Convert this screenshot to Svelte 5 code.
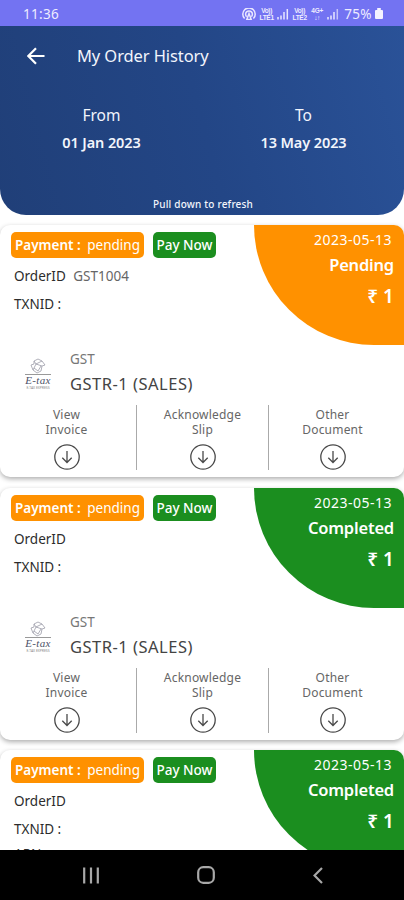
<script>
	const columns = [
		['View', 'Invoice'],
		['Acknowledge', 'Slip'],
		['Other', 'Document']
	];

	const orders = [
		{ id: 'GST1004', status: 'Pending', date: '2023-05-13', amount: 1 },
		{ id: '', status: 'Completed', date: '2023-05-13', amount: 1 },
		{ id: '', status: 'Completed', date: '2023-05-13', amount: 1, note: 'ARN :' }
	];
</script>

{#snippet signal(full)}
	<svg class="signal" viewBox="0 0 12 12" width="12" height="12">
		<path d="M1 11.5V9M4 11.5V7.5M7 11.5V4" />
		<path d="M10.3 11.5V1" opacity={full ? 1 : 0.7} />
	</svg>
{/snippet}

<div class="screen">
	<div class="status-bar">
		<span class="clock">11:36</span>
		<div class="status-icons">
			<svg class="hotspot" viewBox="0 0 14 12" width="14" height="12">
				<path d="M2.6 10.5a6.2 6.2 0 1 1 8.8 0M4.6 8.7a3.4 3.4 0 1 1 4.8 0" />
				<path d="M7 5.5 4.8 11.5h4.4z" fill="#e9e7ff" stroke="none" />
			</svg>
			<div class="net"><span>Vo))</span><span>LTE1</span></div>
			{@render signal(true)}
			<div class="net"><span>Vo))</span><span>LTE2</span></div>
			<div class="net data"><span>4G+</span><span>↓↑</span></div>
			{@render signal(false)}
			<span class="percent">75%</span>
			<svg viewBox="0 0 8 11" width="8" height="11">
				<path d="M2.2 0h3.6v2H7a1 1 0 0 1 1 1v7a1 1 0 0 1-1 1H1a1 1 0 0 1-1-1V3a1 1 0 0 1 1-1h1.2z" fill="#f4f2ff" />
			</svg>
		</div>
	</div>

	<header class="header">
		<div class="title-row">
			<svg class="back" viewBox="0 0 18 18" width="18" height="18">
				<path d="M17.5 9H1.5M9 1.2 1.3 9 9 16.8" />
			</svg>
			<h1>My Order History</h1>
		</div>
		<div class="range">
			<div class="range-item">
				<span class="range-label">From</span>
				<span class="range-date">01 Jan 2023</span>
			</div>
			<div class="range-item">
				<span class="range-label">To</span>
				<span class="range-date">13 May 2023</span>
			</div>
		</div>
		<p class="refresh">Pull down to refresh</p>
	</header>

	<main class="orders">
		{#each orders as order}
			<article class="card">
				<div class="card-top">
					<div class="info">
						<div class="tags">
							<span class="tag payment"><b>Payment :</b> <span>pending</span></span>
							<button class="tag pay">Pay Now</button>
						</div>
						<p class="line"><span>OrderID</span> <span class="order-id">{order.id}</span></p>
						<p class="line">TXNID :</p>
						{#if order.note}
							<p class="line note">{order.note}</p>
						{/if}
					</div>
					<div class="status" class:done={order.status === 'Completed'}>
						<span class="date">{order.date}</span>
						<span class="state">{order.status}</span>
						<span class="amount">₹ {order.amount}</span>
					</div>
				</div>

				<div class="service">
					<div class="logo">
						<svg viewBox="0 0 18 16" width="18" height="16">
							<path d="M5 3 9 1l4 2 3 4-3 1-1 5-4 2-4-3-2-5 3-1zM5 3l2 3 6-3M7 6l-3 6M7 6l6 2M5 10l4 3 3-5" />
						</svg>
						<span class="logo-name">E-tax</span>
						<span class="logo-sub">E-TAX EXPRESS</span>
					</div>
					<div>
						<p class="category">GST</p>
						<p class="name">GSTR-1 (SALES)</p>
					</div>
				</div>

				<div class="downloads">
					{#each columns as [first, second]}
						<div class="download">
							<span>{first}<br />{second}</span>
							<svg viewBox="0 0 26 26" width="26" height="26">
								<circle cx="13" cy="13" r="12.2" />
								<path d="M13 7v11.5M8.3 13.8l4.7 4.7 4.7-4.7" />
							</svg>
						</div>
					{/each}
				</div>
			</article>
		{/each}
	</main>

	<nav class="nav-bar">
		<svg viewBox="0 0 16 17" width="16" height="17">
			<path d="M1.2 0.5v16M8 0.5v16M14.8 0.5v16" />
		</svg>
		<svg viewBox="0 0 18 18" width="18" height="18">
			<rect x="1.2" y="1.2" width="15.6" height="15.6" rx="5" />
		</svg>
		<svg viewBox="0 0 10 17" width="10" height="17">
			<path d="M9 1 1.5 8.5 9 16" />
		</svg>
	</nav>
</div>

<style>
	:global(body) {
		background: #fff;
	}

	.screen {
		display: flex;
		flex-direction: column;
		width: 404px;
		height: 900px;
		overflow: hidden;
		background: #fff;
		font-family: 'Noto Sans', 'Open Sans', sans-serif;
		color: #333;
	}

	p,
	h1 {
		margin: 0;
	}

	svg {
		display: block;
		flex: none;
	}

	/* --- STATUS BAR --- */
	.status-bar {
		display: flex;
		flex: none;
		align-items: center;
		justify-content: space-between;
		box-sizing: border-box;
		height: 26px;
		padding: 1px 21px 0 23px;
		background: #7373f2;
		color: #eeecff;
	}

	.clock {
		font-size: 13.5px;
		letter-spacing: 0.3px;
	}

	.status-icons {
		display: flex;
		align-items: center;
		gap: 3px;
	}

	.hotspot path,
	.signal path {
		fill: none;
		stroke: #e9e7ff;
		stroke-width: 1.5;
	}

	.net {
		display: flex;
		flex-direction: column;
		align-items: center;
		width: 15px;
		font-family: 'Liberation Sans', sans-serif;
		font-size: 6.5px;
		font-weight: 700;
		line-height: 7px;
		letter-spacing: -0.3px;
	}

	.data {
		width: 14px;
	}

	.percent {
		margin-left: 2px;
		font-size: 13.5px;
		letter-spacing: 0.4px;
	}

	/* --- HEADER --- */
	.header {
		display: flex;
		flex: none;
		flex-direction: column;
		box-sizing: border-box;
		height: 189px;
		padding-top: 17px;
		border-radius: 0 0 26px 26px;
		background: linear-gradient(75deg, #203f78, #234686 50%, #2a5298);
		color: #f2f5fc;
	}

	.title-row {
		display: flex;
		align-items: center;
		gap: 32px;
		height: 26px;
		padding-left: 27px;
	}

	.back path {
		fill: none;
		stroke: #fff;
		stroke-width: 2.2;
	}

	h1 {
		font-size: 16.5px;
		font-weight: 400;
		line-height: 26px;
		letter-spacing: -0.1px;
	}

	.range {
		display: grid;
		grid-template-columns: 203px 1fr;
		margin-top: 33px;
	}

	.range-item {
		display: flex;
		flex-direction: column;
		align-items: center;
	}

	.range-label {
		font-size: 15.5px;
		line-height: 27px;
	}

	.range-date {
		font-size: 14.5px;
		font-weight: 600;
		line-height: 27px;
		letter-spacing: -0.1px;
	}

	.refresh {
		margin-top: 40px;
		font-size: 10px;
		font-weight: 500;
		line-height: 16px;
		letter-spacing: 0.2px;
		padding-left: 2px;
		text-align: center;
	}

	/* --- ORDER CARDS --- */
	.orders {
		display: flex;
		flex: 1;
		flex-direction: column;
		gap: 10.5px;
		min-height: 0;
		padding-top: 10px;
		overflow: hidden;
	}

	.card {
		flex: none;
		height: 252px;
		border-radius: 10px;
		background: #fff;
		box-shadow: 0 2px 5px rgba(0, 0, 0, 0.32);
	}

	.card-top {
		display: flex;
		justify-content: space-between;
		height: 120px;
	}

	.info {
		padding: 7px 0 0 11px;
	}

	.tags {
		display: flex;
		gap: 9px;
		margin-bottom: 4px;
	}

	.tag {
		box-sizing: border-box;
		height: 26px;
		border: none;
		border-radius: 5px;
		color: #fff;
		font-family: inherit;
		font-size: 13.5px;
		line-height: 26px;
		white-space: nowrap;
	}

	.payment {
		display: flex;
		justify-content: space-between;
		width: 133px;
		padding: 0 4px;
		background: #ff9100;
	}

	.payment b {
		font-weight: 600;
	}

	.pay {
		width: 63px;
		padding: 0;
		background: #1b8e1f;
		font-weight: 500;
	}

	.line {
		height: 28px;
		padding-left: 3px;
		color: #2c2c2c;
		font-size: 13.5px;
		line-height: 28px;
	}

	.note {
		margin-top: -3px;
	}

	.order-id {
		margin-left: 4px;
		color: #666;
	}

	.status {
		display: flex;
		flex-direction: column;
		align-items: flex-end;
		box-sizing: border-box;
		width: 150px;
		height: 120px;
		padding: 4px 10px 0 0;
		border-radius: 0 10px 0 120px;
		background: #ff9100;
		color: #fff;
	}

	.status.done {
		background: #1b8e1f;
	}

	.date {
		margin-right: 2px;
		font-size: 14px;
		line-height: 21px;
		letter-spacing: 0.5px;
	}

	.state {
		font-size: 16.5px;
		font-weight: 600;
		line-height: 29px;
		letter-spacing: -0.2px;
	}

	.amount {
		font-size: 19px;
		font-weight: 600;
		line-height: 34px;
	}

	.service {
		display: flex;
		gap: 19px;
		height: 58px;
		padding: 2px 0 0 25px;
	}

	.logo {
		display: flex;
		flex-direction: column;
		align-items: center;
		width: 26px;
		padding-top: 11px;
	}

	.logo path {
		fill: none;
		stroke: #9c9ca8;
		stroke-width: 0.8;
	}

	.logo-name {
		width: 26px;
		border-top: 1px solid #999;
		color: #4c5168;
		font-family: 'Liberation Serif', serif;
		font-size: 11px;
		font-style: italic;
		line-height: 11px;
		letter-spacing: 0.3px;
		text-align: center;
	}

	.logo-sub {
		color: #888;
		font-size: 3.4px;
		line-height: 4px;
		white-space: nowrap;
	}

	.category {
		color: #777;
		font-size: 13.5px;
		line-height: 24px;
	}

	.name {
		color: #444;
		font-size: 16.5px;
		line-height: 25px;
		letter-spacing: 0.5px;
	}

	.downloads {
		display: grid;
		grid-template-columns: 136px 132px 1fr;
		height: 63px;
		padding-right: 8px;
	}

	.download {
		display: flex;
		flex-direction: column;
		align-items: center;
		gap: 7px;
		padding-top: 2px;
		color: #666;
		font-size: 12px;
		line-height: 15px;
		letter-spacing: 0.2px;
		text-align: center;
	}

	.download:first-child {
		padding-right: 3px;
	}

	.download + .download {
		border-left: 1px solid #aaa;
	}

	.download svg {
		fill: none;
		stroke: #4a4a4a;
		stroke-width: 1.3;
	}

	/* --- NAV BAR --- */
	.nav-bar {
		display: flex;
		flex: none;
		align-items: center;
		justify-content: space-between;
		box-sizing: border-box;
		height: 50px;
		padding: 0 81px 0 83px;
		background: #000;
	}

	.nav-bar svg {
		fill: none;
		stroke: #a8a8a8;
		stroke-width: 2.2;
	}
</style>
